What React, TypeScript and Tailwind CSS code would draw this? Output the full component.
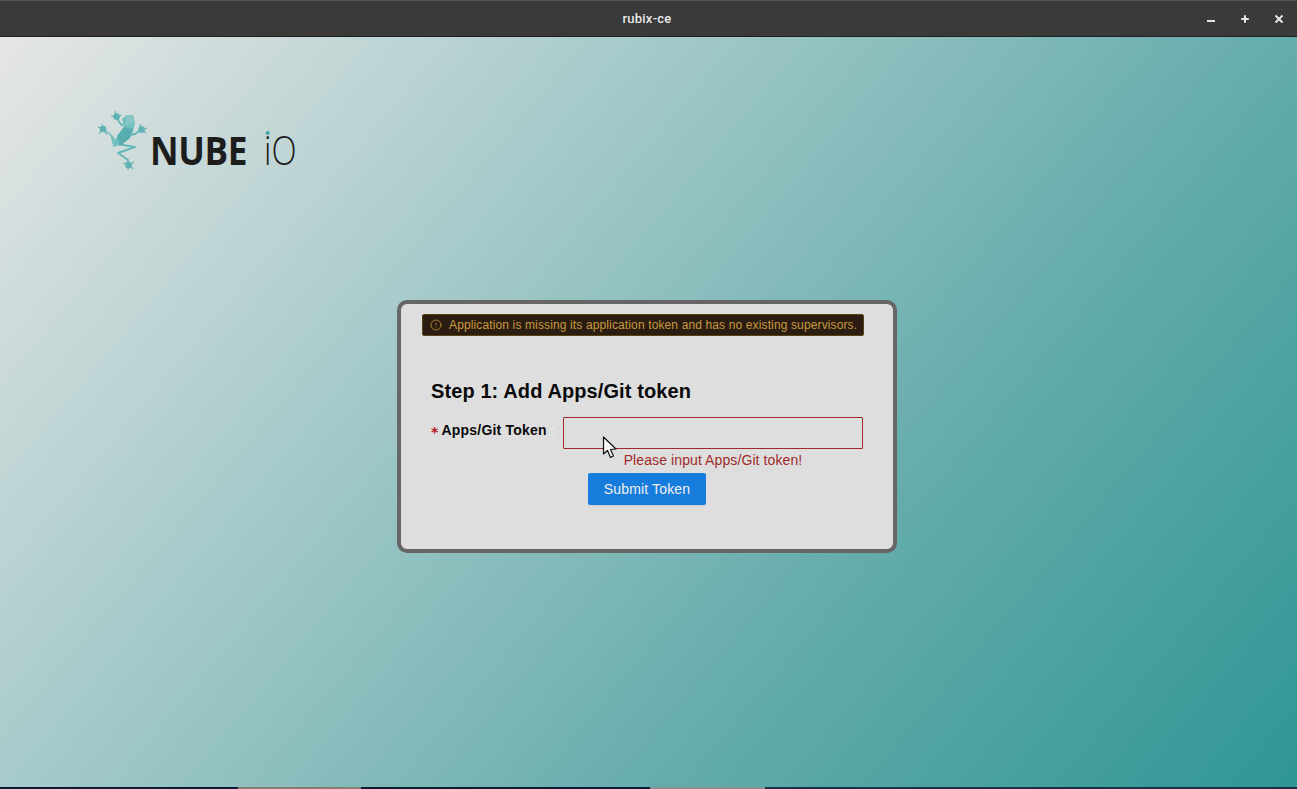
import { CircleAlert } from "lucide-react";

function FrogLogo() {
  return (
    <svg width="60" height="70" viewBox="0 0 60 70" aria-hidden className="shrink-0">
      {/* hind legs */}
      <path d="M8 24 L16 30 L19 41 L23 39 L16 30" fill="#8ccaca" stroke="#6fbcbc" strokeWidth="1.4" strokeLinejoin="round" />
      <path d="M22 39 L40 42 L23 48 L33 55 L33 62" fill="none" stroke="#66b7b8" strokeWidth="1.9" strokeLinejoin="round" />
      {/* body */}
      <polygon points="27,14 32,10 38,10 40,18 38,26 35,33 25,41 18,38 24,29 29,22" fill="#72bfbf" />
      <polygon points="29,22 38,24 35,33 25,41 22,31" fill="#58aeaf" />
      <polygon points="31,10 38,10 40,18 31,20" fill="#88c6c6" />
      {/* front arms */}
      <path d="M28 21 L24 17 L22 12" fill="none" stroke="#66b7b8" strokeWidth="1.9" />
      <path d="M35 30 L40 29 L46 25" fill="none" stroke="#66b7b8" strokeWidth="1.9" />
      {/* feet */}
      <g fill="#60b3b4" stroke="#60b3b4" strokeWidth="1.1">
        <circle cx="21.5" cy="11.5" r="2.8" />
        <path d="M21.5 11.5 L16 11 M21.5 11.5 L20 6 M21.5 11.5 L26.5 10" />
        <circle cx="46.5" cy="24.5" r="2.8" />
        <path d="M46.5 24.5 L45 19 M46.5 24.5 L52 23 M46.5 24.5 L51 28" />
        <circle cx="8" cy="24" r="2.8" />
        <path d="M8 24 L3 22 M8 24 L7 19 M8 24 L4 29 M8 24 L12 30" />
        <circle cx="33.5" cy="60" r="2.8" />
        <path d="M33.5 60 L28 58 M33.5 60 L39 57 M33.5 60 L38 64 M33.5 60 L33 65" />
      </g>
    </svg>
  );
}

function Cursor() {
  return (
    <svg
      width="16"
      height="24"
      viewBox="0 0 16 24"
      aria-hidden
      className="pointer-events-none absolute left-[171px] top-[19px]"
    >
      <path d="M1.5 1 L1.5 18 L5.5 14.5 L8.5 21.5 L11.5 20 L8.5 13.5 L14 13 Z" fill="#f4f4f4" stroke="#111" strokeWidth="1.2" strokeLinejoin="round" />
    </svg>
  );
}

export default function App() {
  return (
    <div className="flex h-screen flex-col overflow-hidden font-['Liberation_Sans',Arial,sans-serif]">
      <header className="flex h-[37px] shrink-0 items-center border-t border-b border-t-[#565656] border-b-[#1f1f1f] bg-[#3a3a3a] pr-[1px]">
        <div className="w-[100px]" />
        <span className="flex-1 text-center font-['Roboto','Noto_Sans',sans-serif] text-[13px] font-medium tracking-[0.25px] text-[#e8e8e8]">
          rubix-ce
        </span>
        <div className="flex items-center">
          <button className="flex h-[35px] w-[34px] items-center justify-center">
            <span className="mt-[5px] h-[2px] w-[8px] bg-[#e6e6e6]" />
          </button>
          <button className="flex h-[35px] w-[34px] items-center justify-center">
            <svg width="10" height="10" viewBox="0 0 10 10" aria-hidden>
              <path d="M5 1.2V8.8M1.2 5H8.8" stroke="#e6e6e6" strokeWidth="2" />
            </svg>
          </button>
          <button className="flex h-[35px] w-[34px] items-center justify-center">
            <svg width="10" height="10" viewBox="0 0 10 10" aria-hidden>
              <path d="M1.5 1.5L8.5 8.5M8.5 1.5L1.5 8.5" stroke="#e6e6e6" strokeWidth="2" />
            </svg>
          </button>
        </div>
      </header>

      <main className="flex min-h-0 flex-1 flex-col bg-[linear-gradient(130deg,#e6e6e6_0%,#a9cbcb_32%,#64acab_67%,#2f9695_100%)] pr-[3px]">
        <div className="flex h-[263px] shrink-0 items-start pl-[95px] pt-[68px]">
          <FrogLogo />
          <div className="-ml-[5px] mt-[22px] flex items-baseline font-['Open_Sans',sans-serif] text-[40px] leading-[46px] text-[#1d1d1d]">
            <span className="inline-block w-[114px] origin-left scale-x-[0.88] font-bold tracking-[-0.4px]">NUBE</span>
            <span className="inline-block origin-left scale-x-[0.82] font-light">
              <span className="relative">
                i
                <span className="absolute left-[2px] top-[9px] h-[4px] w-[5px] rounded-full bg-[#4aa5a6]" />
              </span>
              O
            </span>
          </div>
        </div>

        <div className="mx-auto flex h-[253px] w-[500px] flex-col rounded-[10px] border-4 border-[#666] bg-[#dedede] pl-[21px] pr-[29px] pt-[10px]">
          <div className="flex h-[22px] items-center rounded-[2px] border border-[#594214] bg-[#2b1d11] pl-[7px] text-[12px] tracking-[0.13px] text-[#c89a40]">
            <CircleAlert size={12} strokeWidth={1.5} className="shrink-0" />
            <span className="ml-[7px] whitespace-nowrap">
              Application is missing its application token and has no existing supervisors.
            </span>
          </div>

          <h2 className="ml-[9px] mt-[43px] text-[20px] font-bold leading-[24px] tracking-[0.1px] text-[#0a0a0a]">
            Step 1: Add Apps/Git token
          </h2>

          <div className="relative ml-[9px] mt-[14px] flex items-start">
            <div className="flex h-[26px] w-[132px] shrink-0 items-center whitespace-nowrap text-[14px] font-bold tracking-[0.2px] text-[#0a0a0a]">
              <span className="mr-[3px] mt-[5px] font-['DejaVu_Sans',sans-serif] text-[14px] font-bold text-[#b3161c]">*</span>
              Apps/Git Token
              <span className="ml-[4px] font-normal text-[#f2f2f2]">:</span>
            </div>
            <div className="w-[300px]">
              <input className="block h-[32px] w-full rounded-[1px] border border-[#a3282b] bg-transparent shadow-[0_0_1px_#f4c8c8] outline-none" />
              <div className="mt-[1px] text-center text-[14px] leading-[20px] tracking-[0.1px] text-[#9e2a2a]">
                Please input Apps/Git token!
              </div>
            </div>
            <Cursor />
          </div>

          <button className="ml-[166px] mt-[3px] h-[32px] w-[118px] rounded-[2px] bg-[#177ddc] text-[14px] tracking-[0.15px] text-[#f0f0f0] shadow-[0_2px_0_rgba(0,0,0,0.04)]">
            Submit Token
          </button>
        </div>
        <div className="flex-1" />
      </main>

      <div className="flex h-[2px] shrink-0 bg-[#0c1b33]">
        <div className="w-[238px]" />
        <div className="w-[123px] bg-[#8a7a78]" />
        <div className="w-[289px]" />
        <div className="w-[115px] bg-[#8e8f92]" />
        <div className="flex-1 bg-[#1d3044]" />
      </div>
    </div>
  );
}
